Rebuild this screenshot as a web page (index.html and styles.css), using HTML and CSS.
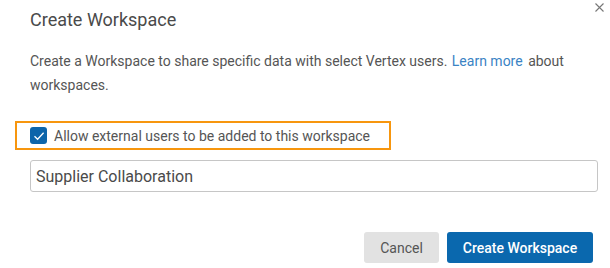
FILE: index.html
```html
<!DOCTYPE html>
<html lang="en">
<head>
  <meta charset="UTF-8">
  <title>Create Workspace</title>
  <link rel="stylesheet" href="styles.css">
</head>
<body>
  <div class="dialog">
    <button class="close" aria-label="Close">
      <svg width="9" height="9" viewBox="0 0 9 9"><path d="M0.5 0.5L8.5 8.5M8.5 0.5L0.5 8.5" stroke="#777" stroke-width="1.1" fill="none"/></svg>
    </button>
    <h2 class="title">Create Workspace</h2>
    <p class="intro">Create a Workspace to share specific data with select Vertex users. <a href="#">Learn more</a> about workspaces.</p>

    <div class="highlight">
      <label class="check">
        <span class="box">
          <svg width="12" height="10" viewBox="0 0 12 10"><path d="M1.5 5.2L4.6 8.2L10.6 1.8" stroke="#fff" stroke-width="1.3" fill="none"/></svg>
        </span>
        Allow external users to be added to this workspace
      </label>
    </div>

    <div class="field">
      <input type="text" value="Supplier Collaboration">
    </div>

    <div class="actions">
      <button class="btn btn-cancel">Cancel</button>
      <button class="btn btn-primary">Create Workspace</button>
    </div>
  </div>
</body>
</html>
```

FILE: styles.css
```css
html,
body {
  margin: 0;
  padding: 0;
  background: #fff;
}

body {
  font-family: Roboto, "Liberation Sans", sans-serif;
  color: #555;
}

.dialog {
  position: relative;
  width: 610px;
  height: 268px;
  box-sizing: border-box;
  padding: 8px 13px 0 30px;
}

.close {
  position: absolute;
  top: 3px;
  right: 6px;
  padding: 0;
  border: 0;
  background: none;
  line-height: 0;
}

.title {
  margin: 0;
  font-size: 18px;
  font-weight: 400;
  line-height: 24px;
  color: #4a4a4a;
}

.intro {
  margin: 17px 0 0;
  font-size: 14px;
  line-height: 24px;
  color: #555;
}

.intro a {
  color: #3a83c4;
  text-decoration: none;
  padding: 0 2px 0 1px;
}

.highlight {
  margin: 24px 0 0 -15px;
  width: 376px;
  height: 29px;
  box-sizing: border-box;
  border: 2px solid #f7960e;
  display: flex;
  align-items: center;
  padding-left: 13px;
}

.check {
  display: flex;
  align-items: center;
  gap: 7px;
  font-size: 14px;
  color: #555;
}

.box {
  width: 17px;
  height: 17px;
  border-radius: 3px;
  background: #0d65aa;
  display: flex;
  align-items: center;
  justify-content: center;
}

.field {
  margin-top: 10px;
}

.field input {
  width: 568px;
  height: 32px;
  box-sizing: border-box;
  border: 1px solid #c6c6c6;
  border-radius: 3px;
  padding: 0 5px;
  font-family: inherit;
  font-size: 16px;
  color: #4a4a4a;
}

.actions {
  display: flex;
  justify-content: flex-end;
  gap: 8px;
  margin-top: 40px;
  padding-right: 4px;
}

.btn {
  height: 31px;
  border: 0;
  border-radius: 3px;
  font-family: inherit;
  font-size: 14px;
  padding: 0;
  white-space: nowrap;
}

.btn-cancel {
  width: 75px;
  background: #e2e2e2;
  color: #555;
}

.btn-primary {
  width: 146px;
  background: #0a68ae;
  color: #fff;
  font-weight: 500;
}
```
